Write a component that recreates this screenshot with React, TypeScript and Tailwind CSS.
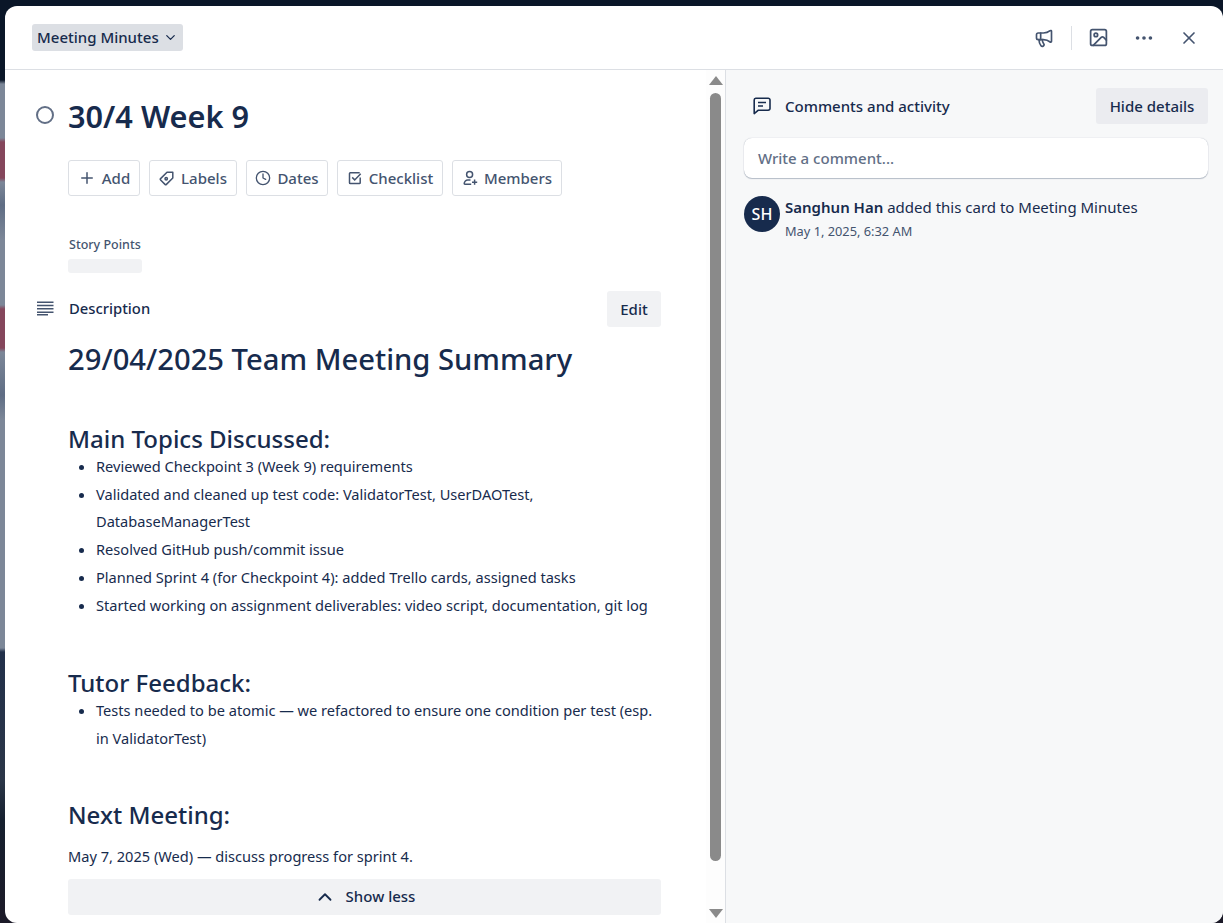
import { Plus, Clock, ChevronDown, ChevronUp, X, Ellipsis, Image, Megaphone } from 'lucide-react'
import type { ReactNode } from 'react'

function LabelIcon() {
  return (
    <svg width="16" height="16" viewBox="0 0 16 16" fill="none" stroke="currentColor" strokeWidth="1.5">
      <path d="M1.6 8.6 8 2.2h5.8V8l-6.4 6.4a1 1 0 0 1-1.4 0l-4.4-4.4a1 1 0 0 1 0-1.4Z" strokeLinejoin="round" />
      <circle cx="7.2" cy="8.8" r="1.2" />
    </svg>
  )
}

function CheckIcon() {
  return (
    <svg width="16" height="16" viewBox="0 0 16 16" fill="none" stroke="currentColor" strokeWidth="1.5">
      <path d="M13.2 7.5v5.2a.8.8 0 0 1-.8.8H3.3a.8.8 0 0 1-.8-.8V3.6a.8.8 0 0 1 .8-.8h9.4" />
      <path d="m5.2 7.4 2.5 2.5 6-6.2" />
    </svg>
  )
}

function MemberIcon() {
  return (
    <svg width="16" height="16" viewBox="0 0 16 16" fill="none" stroke="currentColor" strokeWidth="1.5">
      <circle cx="7.6" cy="4.6" r="3" />
      <path d="M8.5 10H6a3.6 3.6 0 0 0-3.8 3.5c0 .4.3.7.7.7h6.3" />
      <path d="M12.6 9.6v5.2M10 12.2h5.2" />
    </svg>
  )
}

function DescIcon() {
  return (
    <svg width="18" height="16" viewBox="0 0 18 16" fill="currentColor" className="ml-px text-[#44546f]">
      <path d="M0 .5h16.5V2H0zM0 3.8h16.5v1.5H0zM0 7.1h16.5v1.5H0zM0 10.4h16.5v1.5H0zM0 13h11v1.4H0z" />
    </svg>
  )
}

function CommentIcon() {
  return (
    <svg width="20" height="20" viewBox="0 0 20 20" fill="none" stroke="currentColor" strokeWidth="1.6">
      <path d="M3.8 2.2h12.4a1.8 1.8 0 0 1 1.8 1.8v8.4a1.8 1.8 0 0 1-1.8 1.8H6.4l-4.2 3.4V4a1.8 1.8 0 0 1 1.6-1.8Z" strokeLinejoin="round" />
      <path d="M6 6.5h8M6 10h5" />
    </svg>
  )
}

const actions = [
  { label: 'Add', icon: <Plus size={18} />, w: 'w-[72px]' },
  { label: 'Labels', icon: <LabelIcon />, w: 'w-[88px]' },
  { label: 'Dates', icon: <Clock size={16} />, w: 'w-[82px]' },
  { label: 'Checklist', icon: <CheckIcon />, w: 'w-[106px]' },
  { label: 'Members', icon: <MemberIcon />, w: 'w-[110px]' },
]

function ActionButton({ label, icon, w }: { label: string; icon: ReactNode; w: string }) {
  return (
    <button className={`${w} h-9 flex items-center justify-center gap-1.5 rounded-[3px] border border-[#dcdfe4] text-[15px] font-medium text-[#44546f]`}>
      {icon}
      {label}
    </button>
  )
}

function Bullet({ children }: { children: ReactNode }) {
  return <li className="leading-[27.7px]">{children}</li>
}

export default function App() {
  return (
    <div className="h-[923px] overflow-hidden pt-1.5 pl-[5px] font-['Noto_Sans',sans-serif] text-[#172b4d] bg-[linear-gradient(180deg,#0a1628_0,#0a1628_80px,#7c8798_84px,#7c8798_138px,#85475c_142px,#85475c_178px,#7c8798_182px,#5f6d84_205px,#7c8798_240px,#7c8798_305px,#85475c_309px,#85475c_348px,#7c8798_352px,#5f6d84_395px,#7c8798_420px,#7c8798_648px,#22304a_652px,#2b3648_780px,#16202f_820px,#1c1a28_923px)]">
      <div className="h-[917px] rounded-xl bg-white flex flex-col overflow-hidden">
        <header className="h-[64px] shrink-0 flex items-center justify-between border-b border-[#dcdfe4] pl-[27px] pr-[24px]">
          <button className="h-[27px] px-[5px] flex items-center gap-1 rounded-[3px] bg-[#dcdfe4] text-[15px] font-medium">
            Meeting Minutes
            <ChevronDown size={15} />
          </button>
          <div className="flex items-center text-[#44546f]">
            <Megaphone size={20} />
            <div className="ml-[17px] mr-4 h-6 w-px bg-[#dcdfe4]" />
            <Image size={21} />
            <Ellipsis size={22} className="ml-6" />
            <X size={20} className="ml-6" />
          </div>
        </header>
        <div className="flex flex-1 min-h-0">
          <main className="w-[721px] shrink-0 flex border-r border-[#dcdfe4]">
            <div className="w-[701px] pl-[31px] pr-[45px] pt-[27px]">
              <div className="flex items-center gap-[14px]">
                <div className="-mt-0.5 w-[18px] h-[18px] rounded-full border-2 border-[#626f86]" />
                <h1 className="text-[30.7px] font-semibold leading-[38px]">30/4 Week 9</h1>
              </div>
              <div className="mt-[25px] ml-[32px] flex gap-[9px]">
                {actions.map((a) => (
                  <ActionButton key={a.label} {...a} />
                ))}
              </div>
              <div className="mt-10 ml-[32px]">
                <div className="pl-px text-[12.5px] font-medium leading-[18px] text-[#44546f]">Story Points</div>
                <div className="mt-[5px] h-3.5 w-[74px] rounded-[3px] bg-[#f1f2f4]" />
              </div>
              <div className="mt-[18px] flex items-center">
                <DescIcon />
                <div className="-mt-0.5 ml-[14px] text-[14.8px] font-medium flex-1">Description</div>
                <button className="h-9 w-[54px] rounded-[3px] bg-[#f1f2f4] text-[15px] font-medium">Edit</button>
              </div>
              <div className="ml-[33px] text-[14.6px]">
                <h2 className="-ml-px mt-[12px] text-[29.2px] font-medium leading-10">29/04/2025 Team Meeting Summary</h2>
                <h3 className="-ml-px mt-[45px] text-2xl font-medium leading-[29px]">Main Topics Discussed:</h3>
                <ul className="list-disc pl-[27px]">
                  <Bullet>Reviewed Checkpoint 3 (Week 9) requirements</Bullet>
                  <Bullet>Validated and cleaned up test code: ValidatorTest, UserDAOTest, DatabaseManagerTest</Bullet>
                  <Bullet>Resolved GitHub push/commit issue</Bullet>
                  <Bullet>Planned Sprint 4 (for Checkpoint 4): added Trello cards, assigned tasks</Bullet>
                  <Bullet>Started working on assignment deliverables: video script, documentation, git log</Bullet>
                </ul>
                <h3 className="-ml-px mt-[49px] text-2xl font-medium leading-[29px]">Tutor Feedback:</h3>
                <ul className="list-disc pl-[27px]">
                  <Bullet>Tests needed to be atomic — we refactored to ensure one condition per test (esp. in ValidatorTest)</Bullet>
                </ul>
                <h3 className="-ml-px mt-[47px] text-2xl font-medium leading-[29px]">Next Meeting:</h3>
                <p className="-ml-px mt-[17px] leading-5">May 7, 2025 (Wed) — discuss progress for sprint 4.</p>
                <button className="mt-[13px] -ml-px w-[calc(100%+1px)] h-9 flex items-center justify-center gap-2.5 rounded-[3px] bg-[#f1f2f4] text-[15px] font-medium">
                  <ChevronUp size={22} />
                  Show less
                </button>
              </div>
            </div>
            <div className="flex-1 flex flex-col items-center bg-[#fdfdfd] pt-[6px] pb-[5px]">
              <div className="h-0 w-0 border-x-[7px] border-b-[9px] border-x-transparent border-b-[#8a8a8a]" />
              <div className="mt-2 h-[768px] w-[11px] rounded-full bg-[#8a8a8a]" />
              <div className="mt-auto h-0 w-0 border-x-[7px] border-t-[9px] border-x-transparent border-t-[#8a8a8a]" />
            </div>
          </main>
          <aside className="flex-1 bg-[#f7f8f9] pl-[18px] pr-[15px] pt-[18px]">
            <div className="flex items-center justify-between">
              <div className="flex items-center gap-[13px] pl-2 text-[15px] font-medium">
                <CommentIcon />
                Comments and activity
              </div>
              <button className="h-9 w-[112px] rounded-[3px] bg-[#ebecf0] text-[15px] font-medium">Hide details</button>
            </div>
            <div className="mt-[14px] h-10 rounded-lg bg-white px-[14px] flex items-center text-[15px] font-medium text-[#626f86] shadow-[0_1px_1px_#091e4240,0_0_1px_#091e424f]">
              Write a comment...
            </div>
            <div className="mt-[18px] flex gap-[5px]">
              <div className="w-9 h-9 shrink-0 rounded-full bg-[#172b4d] text-white text-base font-medium flex items-center justify-center">SH</div>
              <div className="pt-px">
                <div className="text-[15px] leading-5 whitespace-nowrap"><span className="font-semibold">Sanghun Han</span> added this card to Meeting Minutes</div>
                <div className="mt-1.5 text-[12.8px] leading-4 text-[#44546f]">May 1, 2025, 6:32 AM</div>
              </div>
            </div>
          </aside>
        </div>
      </div>
    </div>
  )
}
